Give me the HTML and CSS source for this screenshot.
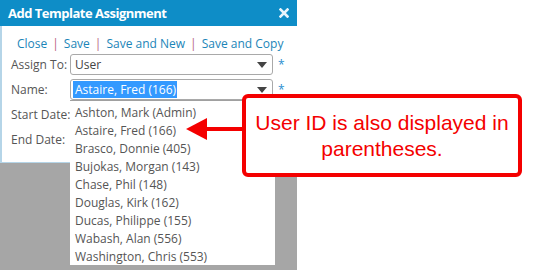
FILE: index.html
```html
<!DOCTYPE html>
<html>
<head>
<meta charset="utf-8">
<link rel="stylesheet" href="styles.css">
</head>
<body>
<div class="stage">
  <div class="panel">
    <div class="dialog">
      <div class="titlebar">
        <span class="title">Add Template Assignment</span>
        <svg class="close" width="10" height="10" viewBox="0 0 10 10"><path d="M1.5 1.5 L8.5 8.5 M8.5 1.5 L1.5 8.5" stroke="#e8f4fb" stroke-width="2.6" stroke-linecap="square"/></svg>
      </div>
      <div class="body">
        <div class="links">
          <a>Close</a><span class="sep">|</span><a>Save</a><span class="sep">|</span><a>Save and New</a><span class="sep">|</span><a>Save and Copy</a>
        </div>
        <div class="row">
          <span class="label">Assign To:</span>
          <div class="select"><span class="val">User</span><span class="caret"></span></div>
          <span class="req">*</span>
        </div>
        <div class="row">
          <span class="label">Name:</span>
          <div class="select"><span class="val sel">Astaire, Fred (166)</span><span class="caret"></span></div>
          <span class="req">*</span>
        </div>
        <div class="row plain">
          <span class="label">Start Date:</span>
        </div>
        <div class="row plain">
          <span class="label">End Date:</span>
        </div>
      </div>
    </div>
    <div class="overlay"></div>
    <ul class="list">
      <li>Ashton, Mark (Admin)</li>
      <li>Astaire, Fred (166)</li>
      <li>Brasco, Donnie (405)</li>
      <li>Bujokas, Morgan (143)</li>
      <li>Chase, Phil (148)</li>
      <li>Douglas, Kirk (162)</li>
      <li>Ducas, Philippe (155)</li>
      <li>Wabash, Alan (556)</li>
      <li>Washington, Chris (553)</li>
    </ul>
  </div>
  <svg class="arrow" width="60" height="26" viewBox="0 0 60 26"><path d="M0 13 L21 2 L21 24 Z" fill="#f40000"/><rect x="20" y="11" width="40" height="4" fill="#f40000"/></svg>
  <div class="callout">User ID is also displayed in<br>parentheses.</div>
</div>
</body>
</html>
```

FILE: styles.css
```css
html, body {
  margin: 0;
  padding: 0;
  background: #ffffff;
}
.stage {
  position: relative;
  width: 534px;
  height: 270px;
  overflow: hidden;
}
.panel {
  position: relative;
  width: 297px;
  height: 270px;
  display: flex;
  flex-direction: column;
}
.dialog {
  height: 163px;
  display: flex;
  flex-direction: column;
  font-family: "Open Sans", "Noto Sans", sans-serif;
  font-size: 12px;
}
.titlebar {
  height: 26px;
  background: #0e8dc7;
  display: flex;
  align-items: center;
  justify-content: space-between;
  padding: 0 8px 0 8px;
  box-sizing: border-box;
}
.title {
  color: #ffffff;
  font-weight: bold;
  font-size: 13px;
  letter-spacing: -0.5px;
}
.close {
  display: block;
}
.body {
  flex: 1;
  background: #ffffff;
  border-left: 2px solid #b5d5e8;
  border-bottom: 1px solid #b5d5e8;
  padding: 10px 0 0 9px;
  box-sizing: border-box;
}
.links {
  height: 16px;
  line-height: 16px;
  padding-left: 6px;
  color: #1b85b8;
  white-space: nowrap;
}
.links a {
  color: #1b85b8;
}
.sep {
  color: #b86080;
  margin: 0 5px;
}
.row {
  display: flex;
  align-items: center;
  height: 21px;
  margin-top: 2px;
}
.row + .row {
  margin-top: 4px;
}
.label {
  width: 59px;
  color: #555555;
  white-space: nowrap;
}
.select {
  width: 203px;
  height: 21px;
  box-sizing: border-box;
  border: 1px solid #a9a9a9;
  border-radius: 3px;
  display: flex;
  align-items: center;
  justify-content: space-between;
  padding: 0 5px 0 2px;
  color: #444444;
  background: #ffffff;
}
.val {
  padding: 0 1px 0 2px;
  line-height: 17px;
}
.val.sel {
  background: #3399ff;
  color: #ffffff;
}
.caret {
  width: 0;
  height: 0;
  border-left: 5px solid transparent;
  border-right: 5px solid transparent;
  border-top: 6px solid #444444;
}
.req {
  color: #2b8fd0;
  margin-left: 5px;
  font-size: 12px;
}
.overlay {
  flex: 1;
  background: #a6a6a6;
}
.list {
  position: absolute;
  left: 70px;
  top: 100px;
  width: 205px;
  height: 165px;
  margin: 0;
  padding: 3px 0 0 0;
  list-style: none;
  background: #ffffff;
  border-top: 1px solid #a0a0a0;
  box-sizing: border-box;
  font-family: "Open Sans", "Noto Sans", sans-serif;
  font-size: 12px;
  color: #555555;
}
.list li {
  height: 18px;
  line-height: 18px;
  padding-left: 5px;
  white-space: nowrap;
}
.arrow {
  position: absolute;
  left: 186px;
  top: 116px;
}
.callout {
  position: absolute;
  left: 242px;
  top: 94px;
  width: 280px;
  height: 83px;
  box-sizing: border-box;
  border: 4px solid #f40000;
  border-radius: 6px;
  background: #ffffff;
  color: #f40000;
  font-family: "Liberation Sans", Arial, sans-serif;
  font-size: 21px;
  line-height: 26px;
  text-align: center;
  display: flex;
  align-items: center;
  justify-content: center;
  padding-top: 1px;
}
```
